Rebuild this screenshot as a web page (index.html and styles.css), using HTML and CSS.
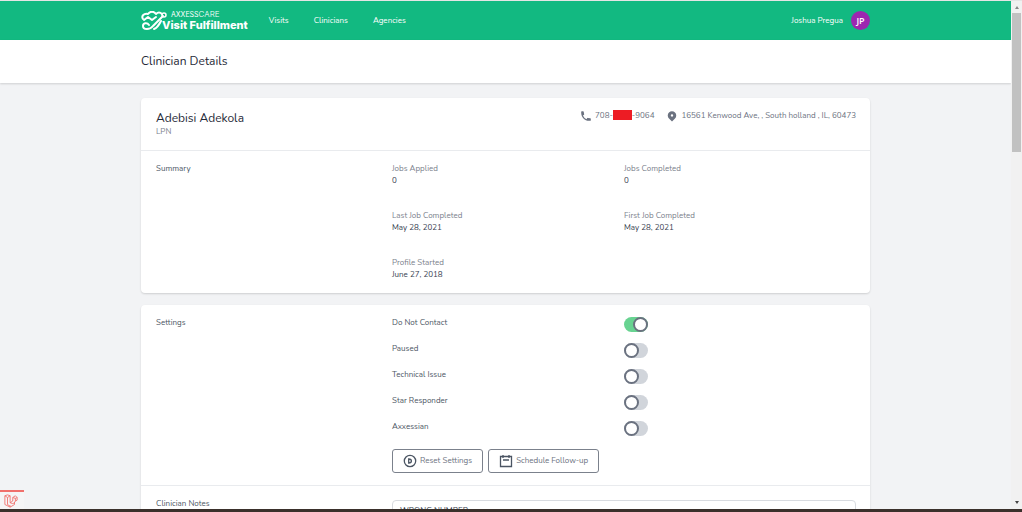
FILE: index.html
```html
<!DOCTYPE html>
<html lang="en">
<head>
    <meta charset="UTF-8">
    <meta name="viewport" content="width=device-width, initial-scale=1.0">
    <title>Clinician Details</title>
    <link rel="stylesheet" href="styles.css">
</head>
<body>
    <div class="window">
        <div class="viewport">
            <div class="page">
                <nav class="navbar">
                    <div class="container navbar-inner">
                        <a class="logo" href="#">
                            <svg class="logo-mark" viewBox="0 0 26 20" fill="none" stroke="currentColor" stroke-width="2" stroke-linecap="round" stroke-linejoin="round" aria-hidden="true">
                                <path d="M2 8C0 5 3 2 7 3C9 0 13 0 15 3C17 1 19 1 21 3"/>
                                <path d="M3 9L7 6L11 9L15 6"/>
                                <path d="M22 5L12 15C9 19 2 19 2 15C2 12 6 11 8 14"/>
                                <path d="M13 18C16 17 18 14 20 10"/>
                                <circle cx="23" cy="4" r="2" stroke-width="1.500"/>
                            </svg>
                            <span class="logo-text">
                                <span class="logo-brand"><b>AXXESS</b>CARE</span>
                                <span class="logo-name">Visit Fulfillment</span>
                            </span>
                        </a>
                        <div class="nav-links">
                            <a href="#">Visits</a>
                            <a href="#">Clinicians</a>
                            <a href="#">Agencies</a>
                        </div>
                        <a class="user" href="#">
                            <span>Joshua Pregua</span>
                            <span class="avatar">JP</span>
                        </a>
                    </div>
                </nav>

                <header class="page-header">
                    <div class="container">
                        <h1>Clinician Details</h1>
                    </div>
                </header>

                <main class="container content">
                    <section class="card">
                        <div class="card-header">
                            <div>
                                <h2>Adebisi Adekola</h2>
                                <p class="role">LPN</p>
                            </div>
                            <div class="contact">
                                <span class="contact-item">
                                    <svg class="icon" viewBox="0 0 20 20" fill="currentColor" aria-hidden="true">
                                        <path d="M2 3a1 1 0 011-1h2.200a1 1 0 01.990.840l.740 4.400a1 1 0 01-.540 1.100l-1.550.800a11 11 0 006.100 6.100l.800-1.600a1 1 0 011.100-.500l4.400.740a1 1 0 01.760.970V17a1 1 0 01-1 1h-2C7.800 18 2 12.200 2 5V3z"/>
                                    </svg>
                                    <span class="phone">708-<span class="redacted"></span>-9064</span>
                                </span>
                                <span class="contact-item">
                                    <svg class="icon" viewBox="0 0 20 20" fill="currentColor" aria-hidden="true">
                                        <path fill-rule="evenodd" d="M5 4a7 7 0 0110 10l-5 5-5-5A7 7 0 015 4zm5 7a2 2 0 100-4 2 2 0 000 4z"/>
                                    </svg>
                                    <span>16561 Kenwood Ave, , South holland , IL, 60473</span>
                                </span>
                            </div>
                        </div>
                        <div class="card-row">
                            <h3>Summary</h3>
                            <dl class="stats">
                                <div><dt>Jobs Applied</dt><dd>0</dd></div>
                                <div><dt>Jobs Completed</dt><dd>0</dd></div>
                                <div><dt>Last Job Completed</dt><dd>May 28, 2021</dd></div>
                                <div><dt>First Job Completed</dt><dd>May 28, 2021</dd></div>
                                <div><dt>Profile Started</dt><dd>June 27, 2018</dd></div>
                            </dl>
                        </div>
                    </section>

                    <section class="card">
                        <div class="card-row">
                            <h3>Settings</h3>
                            <div>
                                <div class="settings">
                                    <label for="doNotContact">Do Not Contact</label>
                                    <input class="toggle" type="checkbox" id="doNotContact" checked>
                                    <label for="paused">Paused</label>
                                    <input class="toggle" type="checkbox" id="paused">
                                    <label for="technicalIssue">Technical Issue</label>
                                    <input class="toggle" type="checkbox" id="technicalIssue">
                                    <label for="starResponder">Star Responder</label>
                                    <input class="toggle" type="checkbox" id="starResponder">
                                    <label for="axxessian">Axxessian</label>
                                    <input class="toggle" type="checkbox" id="axxessian">
                                </div>
                                <div class="actions">
                                    <button type="button">
                                        <svg viewBox="0 0 14 14" fill="none" stroke="currentColor" stroke-width="1.300" aria-hidden="true">
                                            <circle cx="7" cy="7" r="5.700"/>
                                            <path d="M5.700 5v4c3.600 0 3.600-4 0-4z"/>
                                        </svg>
                                        Reset Settings
                                    </button>
                                    <button type="button">
                                        <svg viewBox="0 0 14 14" fill="none" stroke="currentColor" stroke-width="1.300" aria-hidden="true">
                                            <path d="M1.500 2.500h11v10h-11zM4 1v3M10 1v3M4 6h6"/>
                                        </svg>
                                        Schedule Follow-up
                                    </button>
                                </div>
                            </div>
                        </div>
                        <div class="card-row">
                            <h3><label for="notes">Clinician Notes</label></h3>
                            <textarea id="notes" rows="6">WRONG NUMBER</textarea>
                        </div>
                    </section>
                </main>
            </div>
            <div class="scrollbar" aria-hidden="true">
                <span class="arrow arrow-up"></span>
                <span class="thumb"></span>
                <span class="arrow arrow-down"></span>
            </div>
        </div>
        <div class="taskbar"></div>
        <a class="debug-badge" href="#" aria-label="Debug bar">
            <svg viewBox="0 0 16 16" fill="none" stroke="currentColor" aria-hidden="true">
                <path d="M1 2l3-1 3 1v8l3-2V4l3-2 2 2v3l-3 2v3l-5 3-6-3zM1 2l3 2 3-2M4 4v8l3 2M7 10l3 1 2-1M10 4l3 1 2-1M13 5v3M7 13v2"/>
            </svg>
        </a>
    </div>
</body>
</html>
```

FILE: styles.css
```css
* {
    box-sizing: border-box;
}
body {
    margin: 0;
    font-family: Nunito, Lato, "Open Sans", sans-serif;
    font-size: 8px;
    line-height: 12px;
    color: #4b5563;
}
h1, h2, h3, p, dl, dd {
    margin: 0;
    font-weight: normal;
}
a {
    color: inherit;
    text-decoration: none;
}

/* Window frame */
.window {
    display: flex;
    flex-direction: column;
    height: 100vh;
    overflow: hidden;
    border-top: 1px solid #e5e5e5;
}
.viewport {
    display: flex;
    flex: 1;
    min-height: 0;
}
.page {
    flex: 1;
    min-width: 0;
    overflow: hidden;
    background-color: #f2f3f5;
}
.scrollbar {
    display: flex;
    flex-direction: column;
    align-items: center;
    width: 11px;
    padding: 5px 1px;
    background-color: #f1f1f1;
}
.thumb {
    width: 100%;
    height: 28%;
    margin-top: 4px;
    background-color: #c1c1c1;
}
.arrow {
    border: 2px solid transparent;
}
.arrow-up {
    border-top: 0;
    border-bottom: 3px solid #888;
}
.arrow-down {
    margin-top: auto;
    border-top: 3px solid #444;
    border-bottom: 0;
}
.taskbar {
    height: 3px;
    background-color: #3a302b;
}
.debug-badge {
    position: fixed;
    left: 0;
    bottom: 3px;
    width: 24px;
    height: 19px;
    padding: 2px 4px;
    border-top: 2px solid #f0706c;
    background-color: #f5f5f6;
    color: #f0706c;
}
.debug-badge svg {
    display: block;
    width: 14px;
    height: 14px;
}

/* Header */
.container {
    width: 100%;
    max-width: 729px;
    margin: 0 auto;
}
.navbar {
    background-color: #12b981;
    color: #fff;
}
.navbar-inner {
    display: flex;
    align-items: center;
    height: 39px;
}
.logo {
    display: flex;
    align-items: center;
}
.logo-mark {
    width: 26px;
    height: 20px;
    margin-right: -5px;
}
.logo-text {
    display: flex;
    flex-direction: column;
    font-family: Inter, sans-serif;
}
.logo-brand {
    padding-left: 9px;
    font-size: 8px;
    font-weight: 300;
    line-height: 8px;
}
.logo-brand b {
    font-size: 7px;
}
.logo-name {
    font-size: 11px;
    font-weight: 800;
    line-height: 12px;
}
.nav-links {
    display: flex;
    gap: 25px;
    margin-left: 21px;
}
.user {
    display: flex;
    align-items: center;
    gap: 8px;
    margin-left: auto;
}
.avatar {
    width: 19px;
    height: 19px;
    border-radius: 50%;
    background-color: #9c27b0;
    font-family: "Open Sans", sans-serif;
    font-size: 9px;
    font-weight: 600;
    line-height: 19px;
    text-align: center;
}
.page-header {
    padding: 13px 0 14px;
    background-color: #fff;
    box-shadow: 0 1px 2px rgba(0, 0, 0, 0.15);
}
h1, h2 {
    font-size: 12px;
    line-height: 16px;
    color: #1f2937;
}

/* Cards */
.content {
    display: flex;
    flex-direction: column;
    gap: 12px;
    padding-top: 15px;
}
.card {
    border-radius: 4px;
    background-color: #fff;
    box-shadow: 0 1px 2px rgba(0, 0, 0, 0.15);
}
.card-header {
    display: flex;
    justify-content: space-between;
    padding: 12px 14px 12px 15px;
}
.role {
    color: #7b818c;
}
.contact {
    display: flex;
    gap: 12px;
    color: #6b7280;
}
.contact-item {
    display: flex;
    align-items: center;
    gap: 3px;
    height: 12px;
}
.icon {
    width: 12px;
    height: 12px;
}
.phone {
    display: flex;
}
.redacted {
    width: 19px;
    height: 10px;
    background-color: #ed1c24;
}
.card-row {
    display: grid;
    grid-template-columns: 1fr 2fr;
    gap: 4px;
    padding: 12px 14px 12px 15px;
}
.card-header + .card-row,
.card-row + .card-row {
    border-top: 1px solid #e9ebee;
}
h3 {
    font-size: 8px;
    line-height: 12px;
}
.stats {
    display: grid;
    grid-template-columns: 1fr 1fr;
    row-gap: 23px;
}
dt {
    color: #7b818c;
}
dd {
    color: #374151;
}
.settings {
    display: grid;
    grid-template-columns: 1fr 1fr;
    row-gap: 11px;
}
.toggle {
    appearance: none;
    display: flex;
    width: 24px;
    height: 15px;
    margin: 0;
    border-radius: 8px;
    background-color: #d1d5db;
}
.toggle::before {
    content: "";
    box-sizing: border-box;
    width: 15px;
    height: 15px;
    border: 2px solid #6b7280;
    border-radius: 50%;
    background-color: #fff;
}
.toggle:checked {
    justify-content: flex-end;
    background-color: #68d391;
}
.actions {
    display: flex;
    gap: 5px;
    margin-top: 13px;
}
button {
    display: flex;
    align-items: center;
    gap: 3px;
    height: 24px;
    padding: 0 10px;
    border: 1px solid #7b818c;
    border-radius: 3px;
    background-color: #fff;
    color: #6b7280;
    font: inherit;
}
button svg {
    width: 14px;
    height: 14px;
    color: #4b5563;
}
textarea {
    margin-top: 2px;
    padding: 4px 7px;
    border: 1px solid #d8dbe0;
    border-radius: 4px;
    color: #374151;
    font: inherit;
    resize: none;
}
```
